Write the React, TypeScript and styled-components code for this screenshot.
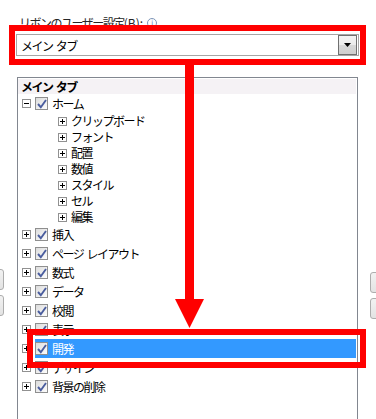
import React from "react";
import styled, { createGlobalStyle } from "styled-components";

const Global = createGlobalStyle`
  html, body { margin: 0; padding: 0; background: #fff; }
  body { font-family: "Noto Sans CJK JP", "Noto Sans", sans-serif; }
`;

const Page = styled.div`
  position: relative;
  width: 376px;
  height: 419px;
  overflow: hidden;
  background: #fff;
  display: flex;
  align-items: flex-start;
`;

const SideCol = styled.div<{ $top: number; $left: number; $shift: number }>`
  display: flex;
  flex-direction: column;
  gap: 5px;
  width: 5px;
  margin-left: ${(p) => p.$left}px;
  padding-top: ${(p) => p.$top}px;
  & > * { margin-left: ${(p) => p.$shift}px; }
`;

const SideButton = styled.div`
  width: 24px;
  height: 21px;
  box-sizing: border-box;
  border: 1px solid #adadad;
  border-radius: 3px;
  background: linear-gradient(#f2f2f2, #e3e3e3);
  flex: none;
`;

const MainCol = styled.div`
  display: flex;
  flex-direction: column;
  width: 343px;
  margin-left: 11px;
`;

const Label = styled.div`
  margin-top: 16px;
  padding-left: 3px;
  height: 14px;
  line-height: 14px;
  font-size: 12px;
  letter-spacing: -1.5px;
  color: #262626;
  display: flex;
  align-items: center;
  gap: 4px;
`;

const Latin = styled.span`
  letter-spacing: 0;
`;

const Info = styled.span`
  width: 8px;
  height: 8px;
  border-radius: 50%;
  border: 1px solid #7d95b8;
  color: #5b7bb0;
  font-size: 7px;
  line-height: 8px;
  text-align: center;
  font-family: "DejaVu Sans", sans-serif;
  letter-spacing: 0;
`;

const Combo = styled.div`
  margin-top: 4px;
  height: 22px;
  box-sizing: border-box;
  border: 1px solid #a6a6a6;
  display: flex;
  align-items: center;
  justify-content: space-between;
  padding-left: 4px;
  padding-right: 1px;
  font-size: 12px;
  letter-spacing: -1.5px;
  word-spacing: 2px;
  color: #000;
  background: #fff;
`;

const ComboButton = styled.div`
  width: 19px;
  height: 20px;
  box-sizing: border-box;
  border: 1px solid #707070;
  background: linear-gradient(#f3f3f3 0%, #ebebeb 50%, #d8d8d8 51%, #cfcfcf 100%);
  display: flex;
  align-items: center;
  justify-content: center;
`;

const Tree = styled.div`
  margin-top: 21px;
  margin-left: 1px;
  width: 341px;
  height: 360px;
  box-sizing: border-box;
  border: 1px solid #828790;
  padding-top: 1px;
  display: flex;
  flex-direction: column;
  font-size: 12px;
  letter-spacing: -1.5px;
  word-spacing: 2px;
  color: #000;
`;

const Header = styled.div`
  height: 15px;
  line-height: 15px;
  background: #f5f2f5;
  font-weight: bold;
  padding-left: 3px;
  margin-right: 1px;
`;

const Row = styled.div<{ $child?: boolean }>`
  display: flex;
  align-items: center;
  height: ${(p) => (p.$child ? 16 : 19)}px;
  padding-left: ${(p) => (p.$child ? 40 : 4)}px;
  gap: 4px;
`;

const Toggle = styled.span`
  width: 9px;
  height: 9px;
  box-sizing: border-box;
  border: 1px solid #919191;
  background: #fff;
  position: relative;
  flex: none;
  &::before {
    content: "";
    position: absolute;
    left: 1px;
    top: 3px;
    width: 5px;
    height: 1px;
    background: #000;
  }
`;

const ToggleClosed = styled(Toggle)`
  &::after {
    content: "";
    position: absolute;
    left: 3px;
    top: 1px;
    width: 1px;
    height: 5px;
    background: #000;
  }
`;

const Item = styled.div<{ $selected?: boolean }>`
  flex: 1;
  display: flex;
  align-items: center;
  gap: 4px;
  height: 19px;
  margin-right: 1px;
  background: ${(p) => (p.$selected ? "#3399ff" : "transparent")};
  color: ${(p) => (p.$selected ? "#fff" : "#000")};
`;

const Text = styled.span`
  white-space: pre;
  line-height: 16px;
`;

const CheckBox = styled.span`
  width: 13px;
  height: 13px;
  box-sizing: border-box;
  border: 1px solid #8f8f8f;
  background: linear-gradient(135deg, #dcdcdc, #fdfdfd);
  display: flex;
  align-items: center;
  justify-content: center;
  flex: none;
`;

const Overlay = styled.div<{ $x: number; $y: number; $w: number; $h: number }>`
  position: absolute;
  left: ${(p) => p.$x}px;
  top: ${(p) => p.$y}px;
  width: ${(p) => p.$w}px;
  height: ${(p) => p.$h}px;
  box-sizing: border-box;
  border: 6px solid #ff0000;
  pointer-events: none;
`;

const ArrowSvg = styled.svg`
  position: absolute;
  left: 170px;
  top: 63px;
  pointer-events: none;
`;

const Check = () => (
  <svg width="10" height="10" viewBox="0 0 10 10">
    <path d="M1 5 L3.8 8.2 L9 1" fill="none" stroke="#4a5d9e" strokeWidth="1.9" />
  </svg>
);

const children = ["クリップボード", "フォント", "配置", "数値", "スタイル", "セル", "編集"];
const tops = ["挿入", "ページ レイアウト", "数式", "データ", "校閲", "表示", "開発", "デザイン", "背景の削除"];

export default function App() {
  return (
    <>
      <Global />
      <Page>
        <SideCol $top={269} $left={0} $shift={-20}>
          <SideButton />
          <SideButton />
        </SideCol>
        <MainCol>
          <Label>
            <span>
              リボンのユーザー設定<Latin>(B):</Latin>
            </span>
            <Info>i</Info>
          </Label>
          <Combo>
            <span>メイン タブ</span>
            <ComboButton>
              <svg width="7" height="4" viewBox="0 0 7 4">
                <path d="M0 0 H7 L3.5 4 Z" fill="#000" />
              </svg>
            </ComboButton>
          </Combo>
          <Tree>
            <Header>メイン タブ</Header>
            <Row>
              <Toggle />
              <Item>
                <CheckBox>
                  <Check />
                </CheckBox>
                <Text>ホーム</Text>
              </Item>
            </Row>
            {children.map((c) => (
              <Row $child key={c}>
                <ToggleClosed />
                <Text>{c}</Text>
              </Row>
            ))}
            {tops.map((t) => (
              <Row key={t}>
                <ToggleClosed />
                <Item $selected={t === "開発"}>
                  <CheckBox>
                    <Check />
                  </CheckBox>
                  <Text>{t}</Text>
                </Item>
              </Row>
            ))}
          </Tree>
        </MainCol>
        <SideCol $top={272} $left={11} $shift={0}>
          <SideButton />
          <SideButton />
        </SideCol>
        <Overlay $x={9} $y={25} $w={357} $h={40} />
        <Overlay $x={27} $y={329} $w={339} $h={39} />
        <ArrowSvg width="40" height="268" viewBox="0 0 40 268">
          <rect x="15" y="0" width="9" height="240" fill="#ff0000" />
          <path d="M5 236 H34 L19.5 265 Z" fill="#ff0000" />
        </ArrowSvg>
      </Page>
    </>
  );
}
